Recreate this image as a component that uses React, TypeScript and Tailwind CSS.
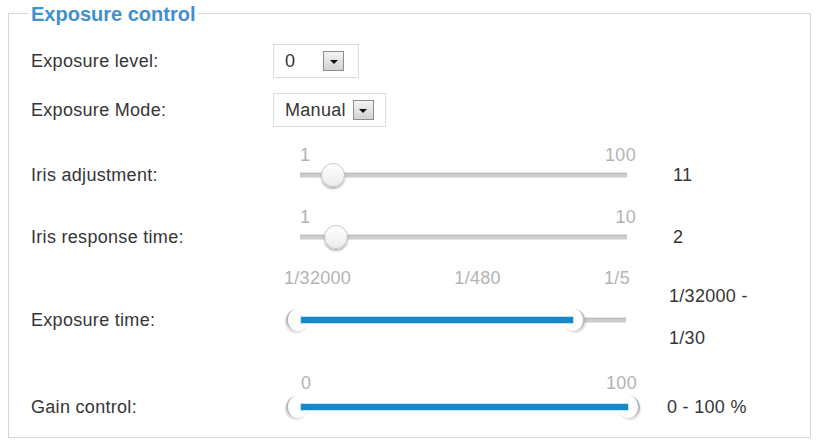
import React from 'react';

const Select = ({ value, width, gap }: { value: string; width: string; gap: string }) => (
  <div className={`flex h-[34px] items-center border border-[#dcdcdc] bg-white pl-[11px] ${width}`}>
    <span className="leading-none">{value}</span>
    <span className={`flex h-[20px] w-[21px] items-center justify-center border border-[#8d8d8d] bg-gradient-to-b from-[#f4f4f4] to-[#d2d2d2] ${gap}`}>
      <span className="mt-[1px] h-0 w-0 border-x-[4px] border-t-[4px] border-x-transparent border-t-[#111]" />
    </span>
  </div>
);

const Ticks = ({ labels, className }: { labels: string[]; className: string }) => (
  <div className={`flex h-[20px] items-center justify-between text-[#b3b3b3] ${className}`}>
    {labels.map(l => (
      <span key={l}>{l}</span>
    ))}
  </div>
);

const Knob = ({ left }: { left: number }) => (
  <div
    className="absolute top-1/2 h-[24px] w-[24px] -translate-x-1/2 -translate-y-1/2 rounded-full border border-[#c9c9c9] bg-gradient-to-b from-white to-[#ececec] shadow-[0_2px_2px_rgba(0,0,0,0.28)]"
    style={{ left }}
  />
);

const SingleSlider = ({ min, max, pos }: { min: string; max: string; pos: number }) => (
  <div className="ml-[27px] w-[336px]">
    <Ticks labels={[min, max]} className="w-[336px]" />
    <div className="relative h-[20px] w-[327px]">
      <div className="absolute inset-x-0 top-1/2 h-[5px] -translate-y-1/2 bg-[#cdcdcd] shadow-[inset_0_1px_1px_rgba(0,0,0,0.15)]" />
      <Knob left={pos} />
    </div>
  </div>
);

const RangeSlider = ({ from, to, height }: { from: number; to: number; height: string }) => (
  <div className={`relative w-[329px] ${height}`}>
    <div className="absolute inset-x-0 top-1/2 h-[5px] -translate-y-1/2 bg-[#cdcdcd] shadow-[inset_0_1px_1px_rgba(0,0,0,0.15)]" />
    <div
      className="absolute top-1/2 h-[22px] w-[22px] -translate-x-1/2 -translate-y-1/2 rounded-full border-l-2 border-[#b9b9b9] bg-white shadow-[-1px_2px_2px_rgba(0,0,0,0.12)]"
      style={{ left: from }}
    />
    <div
      className="absolute top-1/2 h-[22px] w-[22px] -translate-x-1/2 -translate-y-1/2 rounded-full border-r-2 border-[#b9b9b9] bg-white shadow-[1px_2px_2px_rgba(0,0,0,0.12)]"
      style={{ left: to }}
    />
    <div
      className="absolute top-1/2 h-[8px] -translate-y-1/2 border border-[#bfe6fb] bg-[#1787c7]"
      style={{ left: from + 3, width: to - from - 3 }}
    />
  </div>
);

const App: React.FC = () => {
  return (
    <div className="h-[442px] w-[817px] overflow-hidden bg-white pl-[8px] pt-[2px] font-[family-name:Liberation_Sans,Arial,sans-serif] text-[18px] tracking-[0.3px] text-[#353535]">
      <fieldset className="h-[436px] w-[803px] border border-[#d6d6d6] pl-[19px]">
        <legend className="h-[22px] px-[3px] text-[20px] font-bold leading-[24px] tracking-normal text-[#3f90cf]">Exposure control</legend>

        <div className="pl-[3px]">
          <div className="mt-[20px] flex h-[34px] items-center">
            <div className="w-[242px]">Exposure level:</div>
            <Select value="0" width="w-[86px]" gap="ml-[28px]" />
          </div>

          <div className="mt-[15px] flex h-[34px] items-center">
            <div className="w-[242px]">Exposure Mode:</div>
            <Select value="Manual" width="w-[113px]" gap="ml-[7px]" />
          </div>

          <div className="mt-[18px] flex">
            <div className="flex h-[40px] w-[242px] items-center pt-[20px]">Iris adjustment:</div>
            <SingleSlider min="1" max="100" pos={33} />
            <div className="ml-[37px] flex h-[40px] items-center pt-[20px]">11</div>
          </div>

          <div className="mt-[22px] flex">
            <div className="flex h-[40px] w-[242px] items-center pt-[20px]">Iris response time:</div>
            <SingleSlider min="1" max="10" pos={36} />
            <div className="ml-[37px] flex h-[40px] items-center pt-[20px]">2</div>
          </div>

          <div className="mt-[21px] flex">
            <div className="flex h-[84px] w-[242px] items-center pt-[20px]">Exposure time:</div>
            <div className="ml-[11px] w-[352px]">
              <Ticks labels={['1/32000', '1/480', '1/5']} className="w-[346px]" />
              <div className="pl-[13px]">
                <RangeSlider from={0} to={277} height="h-[64px]" />
              </div>
            </div>
            <div className="ml-[33px] flex flex-col gap-[22px] pt-[18px]">
              <div className="h-[20px] leading-[20px]">1/32000 -</div>
              <div className="h-[20px] leading-[20px]">1/30</div>
            </div>
          </div>

          <div className="mt-[21px] flex">
            <div className="flex h-[48px] w-[242px] items-center pt-[20px]">Gain control:</div>
            <div className="ml-[24px] w-[370px]">
              <Ticks labels={['0', '100']} className="ml-[4px] w-[336px]" />
              <RangeSlider from={0} to={332} height="h-[28px]" />
            </div>
            <div className="flex h-[48px] items-center pt-[20px]">0 - 100 %</div>
          </div>
        </div>
      </fieldset>
    </div>
  );
};

export default App;
